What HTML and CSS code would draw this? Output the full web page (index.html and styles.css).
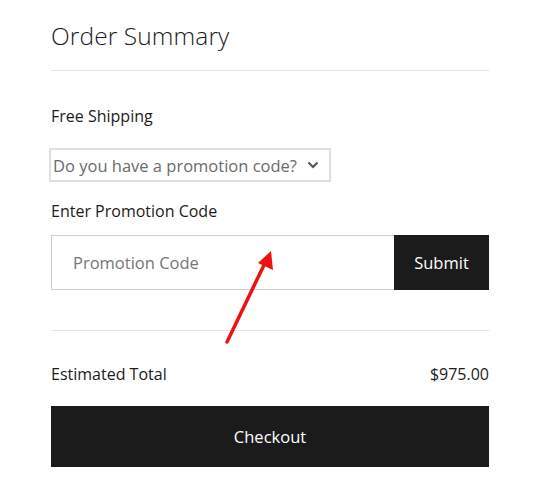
FILE: index.html
```html
<!DOCTYPE html>
<html>
<head>
<meta charset="utf-8">
<link rel="stylesheet" href="styles.css">
</head>
<body>
<div class="summary">
  <h1 class="title">Order Summary</h1>
  <div class="rule"></div>
  <p class="shipping">Free Shipping</p>
  <div class="select">
    <span class="select-text">Do you have a promotion code?</span>
    <svg class="chevron" width="12" height="8" viewBox="0 0 12 8"><path d="M1.5 1.5 L6 6 L10.5 1.5" fill="none" stroke="#555" stroke-width="2.2"/></svg>
  </div>
  <p class="label">Enter Promotion Code</p>
  <div class="promo">
    <div class="promo-input">Promotion Code</div>
    <div class="promo-submit">Submit</div>
  </div>
  <div class="rule rule-lower"></div>
  <div class="total">
    <span>Estimated Total</span>
    <span>$975.00</span>
  </div>
  <div class="checkout">Checkout</div>
  <svg class="annot" width="535" height="502" viewBox="0 0 535 502">
    <line x1="227" y1="342" x2="264" y2="265" stroke="#ee1111" stroke-width="3.5" stroke-linecap="round"/>
    <polygon points="271,251 273,270 258,263" fill="#ee1111"/>
  </svg>
</div>
</body>
</html>
```

FILE: styles.css
```css
html, body {
  margin: 0;
  padding: 0;
  background: #ffffff;
}
body {
  font-family: "Open Sans", "Liberation Sans", sans-serif;
  color: #1b1b1b;
}
.summary {
  width: 438px;
  margin-left: 51px;
  padding-top: 20px;
}
.title {
  margin: 0;
  font-size: 24.5px;
  font-weight: 300;
  line-height: 32px;
  letter-spacing: 0.1px;
}
.rule {
  height: 1px;
  background: #e2e2e2;
  margin-top: 18px;
}
.shipping {
  margin: 34px 0 0;
  font-size: 16px;
  line-height: 22px;
}
.select {
  margin: 21px 0 0 -2px;
  height: 30px;
  border: 2px solid #e0e0e0;
  display: flex;
  align-items: center;
  justify-content: space-between;
  padding: 0 10px 0 2px;
  box-sizing: content-box;
  width: 266px;
}
.select-text {
  font-size: 16.5px;
  color: #6b6b6b;
}
.chevron {
  display: block;
}
.label {
  margin: 18px 0 0;
  font-size: 16px;
  line-height: 22px;
}
.promo {
  display: flex;
  margin-top: 13px;
  height: 55px;
}
.promo-input {
  flex: 1;
  border: 1px solid #cfcfcf;
  border-right: none;
  display: flex;
  align-items: center;
  padding-left: 21px;
  font-size: 16.5px;
  color: #767676;
}
.promo-submit {
  width: 95px;
  background: #1b1b1b;
  color: #ffffff;
  display: flex;
  align-items: center;
  justify-content: center;
  font-size: 16.5px;
  font-weight: 500;
}
.rule-lower {
  margin-top: 40px;
}
.total {
  display: flex;
  justify-content: space-between;
  margin-top: 32px;
  font-size: 16px;
  line-height: 22px;
}
.checkout {
  margin-top: 21px;
  height: 61px;
  background: #1b1b1b;
  color: #ffffff;
  display: flex;
  align-items: center;
  justify-content: center;
  font-size: 16.5px;
  font-weight: 500;
}
.annot {
  position: absolute;
  left: 0;
  top: 0;
  pointer-events: none;
}
```
